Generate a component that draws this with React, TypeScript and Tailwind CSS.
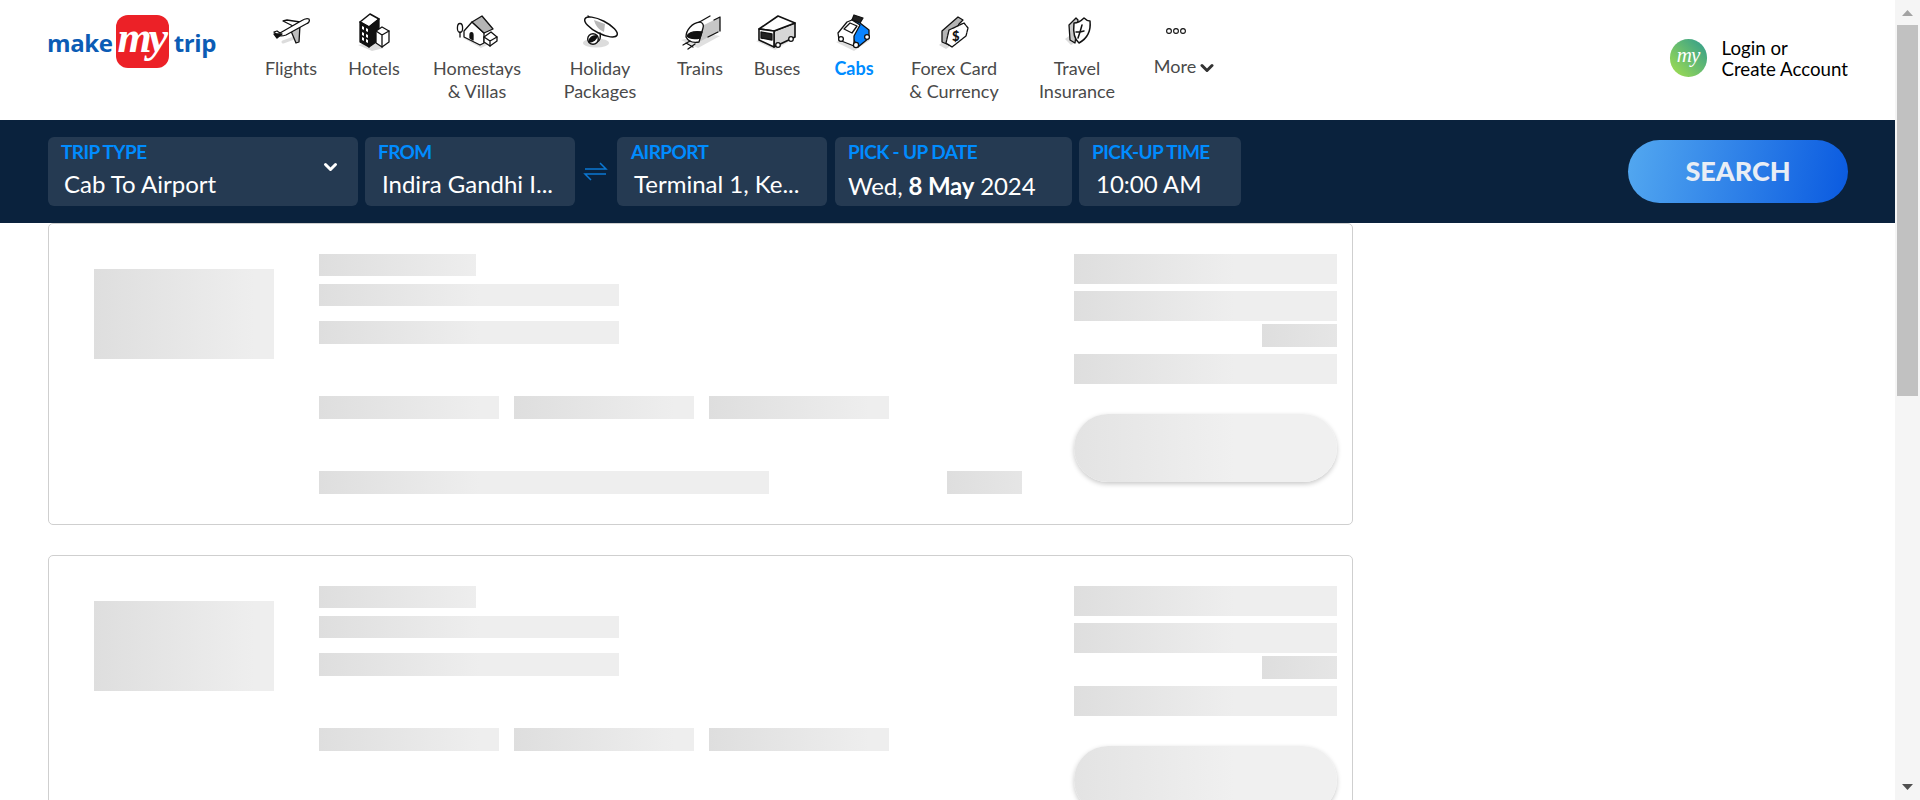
import React from "react";

const S = "#111";
const Svg = ({ children }: { children: React.ReactNode }) => (
  <svg width="44" height="40" viewBox="0 0 44 40" fill="none" stroke={S} strokeWidth="1.3" strokeLinejoin="round" strokeLinecap="round">
    {children}
  </svg>
);

const Plane = () => (
  <Svg>
    <path d="M14 30L25 26" stroke="#dcdcdc" strokeWidth="3" />
    <path d="M22 19L27 31L30 30L31 13Z" fill="#bdbdbd" />
    <path d="M24 14L14 9L18 8L31 10Z" fill="#fff" />
    <path d="M40 7C41 9 40 11 37 12L17 23C14 24 10 24 8 23L5 20L8 19L11 21L32 9C35 7 38 6 40 7Z" fill="#fff" />
    <path d="M5 22L13 22L8 26Z" fill="#111" />
  </Svg>
);
const Hotel = () => (
  <Svg>
    <path d="M6 33L20 39L32 36L20 30Z" fill="#dcdcdc" stroke="none" />
    <path d="M8 10L18 2L27 7L17 15Z" fill="#fff" strokeWidth="1.6" />
    <path d="M17 15L27 7L27 28L17 35Z" fill="#111" />
    <path d="M8 10L17 15L17 35L8 30Z" fill="#111" />
    <path d="M10 14L12 15V18L10 17ZM14 16L16 17V20L14 19ZM10 20L12 21V24L10 23ZM14 22L16 23V26L14 25ZM10 25L12 26V29L10 28ZM14 27L16 28V31L14 30Z" fill="#fff" stroke="none" />
    <path d="M24 19L30 15L37 19V30L30 35L24 31Z" fill="#fff" />
    <path d="M24 19L30 23L37 19M30 23V35" />
  </Svg>
);
const House = () => (
  <Svg>
    <path d="M8 26L26 36L38 30L20 20Z" fill="#e0e0e0" stroke="none" />
    <ellipse cx="5" cy="16" rx="2.6" ry="4.5" fill="#fff" />
    <path d="M5 20V25" />
    <path d="M9 19L17 10L29 21V31L25 33L9 25Z" fill="#fff" />
    <path d="M17 10L27 4L38 17L29 21Z" fill="#b5b5b5" />
    <path d="M15 23C15 20 18 20 18 23V28L15 26Z" fill="#111" />
    <path d="M29 25L36 20L42 25V29L35 34L29 30Z" fill="#fff" />
    <path d="M29 25L35 29L42 25M35 29V34" />
  </Svg>
);
const Holiday = () => (
  <Svg>
    <ellipse cx="18" cy="31" rx="13" ry="4.5" fill="#dcdcdc" stroke="none" />
    <path d="M10 4L13 7" strokeWidth="1.4" />
    <ellipse cx="23" cy="15" rx="18" ry="6.5" transform="rotate(27 23 15)" fill="#fff" strokeWidth="1.5" />
    <path d="M16 8L27 12L26 20C21 18 17 13 16 8Z" fill="#b8b8b8" stroke="none" />
    <path d="M22 21C23 26 22 29 19 30" strokeWidth="1.4" />
    <circle cx="15" cy="27" r="5.3" fill="#fff" strokeWidth="1.4" />
    <path d="M11 30C11 26 15 23 19 24C19 27 15 30 11 30Z" fill="#111" />
  </Svg>
);
const Train = () => (
  <Svg>
    <path d="M3 28L20 36L42 24L30 22Z" fill="#e0e0e0" stroke="none" />
    <path d="M24 14L42 5V19L21 30Z" fill="#c6c6c6" stroke="none" />
    <path d="M18 12L32 4M36 8L42 5V19M30 25L40 20" />
    <path d="M8 25C8 18 14 11 22 10C25 11 26 13 25 16L21 30C15 31 10 29 8 25Z" fill="#fff" />
    <path d="M9 24C11 20 16 19 24 20L22 26C17 27 12 27 9 24Z" fill="#111" />
    <path d="M5 33L12 29M10 37L17 32M8 31L15 35" />
  </Svg>
);
const Bus = () => (
  <Svg>
    <path d="M1 29L20 38L40 26L30 22Z" fill="#e2e2e2" stroke="none" />
    <path d="M19 19L40 11V25L19 35Z" fill="#d6d6d6" strokeWidth="1.6" />
    <path d="M4 17L23 4L40 11L19 19Z" fill="#fff" strokeWidth="1.6" />
    <path d="M4 17L19 19V35L4 28Z" fill="#fff" strokeWidth="1.6" />
    <path d="M6 20L17 22V28L6 26Z" fill="#222" />
    <circle cx="23" cy="33" r="2.3" fill="#fff" />
    <circle cx="36" cy="27" r="2.3" fill="#fff" />
  </Svg>
);
const Cab = () => (
  <Svg>
    <path d="M4 30L22 39L38 28L22 24Z" fill="#dfdfdf" stroke="none" />
    <path d="M22 3L31 6L28 11L20 8Z" fill="#222" />
    <path d="M20 8L28 11L37 18V26L26 35L19 23Z" fill="#0a84ff" />
    <path d="M6 21L15 10L20 8L28 13L22 24V34L7 28Z" fill="#fff" />
    <path d="M12 17L18 11L25 14L20 21Z" fill="#fff" />
    <circle cx="24" cy="33" r="2.6" fill="#fff" />
    <circle cx="35" cy="25" r="2.4" fill="#fff" />
    <circle cx="9" cy="27" r="2.4" fill="#fff" />
  </Svg>
);
const Forex = () => (
  <Svg>
    <path d="M7 33L14 37L20 33L12 29Z" fill="#dcdcdc" stroke="none" />
    <path d="M10 19L26 5L31 8L27 12L17 33L10 30Z" fill="#b5b5b5" />
    <path d="M17 18L32 11L36 16L34 24L20 35L14 31Z" fill="#fff" strokeDasharray="3 1" />
    <text x="20" y="29" fontSize="13" fontWeight="900" fill="#111" stroke="none" fontFamily="Lato, sans-serif">$</text>
  </Svg>
);
const Shield = () => (
  <Svg>
    <path d="M10 27L16 33L22 30L14 24Z" fill="#dcdcdc" stroke="none" />
    <path d="M14 13L21 6L23 8L20 31L15 28Z" fill="#c8c8c8" />
    <path d="M19 11C23 11 26 9 29 6C31 8 33 9 35 9C36 18 33 26 24 31C19 27 18 20 19 11Z" fill="#fff" strokeWidth="1.5" />
    <path d="M27 13L25 20L29 19M25 20L23 26M25 20L21 20" strokeWidth="1.5" />
  </Svg>
);

const Dots = () => (
  <svg width="44" height="40" viewBox="0 0 44 40" fill="none" stroke="#111" strokeWidth="1.1">
    <circle cx="15" cy="19" r="2.4" />
    <circle cx="22" cy="19" r="2.4" />
    <circle cx="29" cy="19" r="2.4" />
  </svg>
);

const Chevron = ({ className }: { className: string }) => (
  <svg className={className} viewBox="0 0 14 10" fill="none" stroke="currentColor" strokeWidth="3" strokeLinecap="round" strokeLinejoin="round">
    <path d="M2 2.5L7 7.5L12 2.5" />
  </svg>
);

const nav = [
  { l: ["Flights"], w: "w-[82px]", I: Plane },
  { l: ["Hotels"], w: "w-[84px]", I: Hotel },
  { l: ["Homestays", "& Villas"], w: "w-[122px]", I: House },
  { l: ["Holiday", "Packages"], w: "w-[124px]", I: Holiday },
  { l: ["Trains"], w: "w-[76px]", I: Train },
  { l: ["Buses"], w: "w-[78px]", I: Bus },
  { l: ["Cabs"], w: "w-[76px]", I: Cab, active: true },
  { l: ["Forex Card", "& Currency"], w: "w-[124px]", I: Forex },
  { l: ["Travel", "Insurance"], w: "w-[122px]", I: Shield },
];

const Logo = () => (
  <div className="flex items-center w-[169px] ml-[47px] mt-[15px] h-[53px] font-['Open_Sans',sans-serif] font-bold text-[24px] text-[#0b5cb5] tracking-[-0.4px]">
    <span className="w-[70px] mt-[3px] leading-none">make</span>
    <span className="w-[53px] h-[53px] shrink-0 rounded-[12px] bg-[#ec2127] flex items-center justify-center">
      <span className="font-['Liberation_Serif',serif] italic text-[44px] leading-none text-white tracking-[-3px] -mt-[8px] -ml-[2px]">my</span>
    </span>
    <span className="ml-[5px] mt-[3px] leading-none">trip</span>
  </div>
);

const Field = ({ w, label, children, lp = "pl-[13px]", pl = "pl-[17px]" }: { w: string; label: string; children: React.ReactNode; lp?: string; pl?: string }) => (
  <div className={`relative ${w} h-[69px] rounded-[6px] bg-[#253a52] shrink-0 pt-[4px]`}>
    <div className={`${lp} text-[#008cff] text-[19px] leading-[22px] font-bold tracking-[-0.6px]`}>{label}</div>
    <div className={`${pl} mt-[6px] text-white text-[24px] leading-[30px] whitespace-nowrap`}>{children}</div>
  </div>
);

const shim = "bg-[linear-gradient(to_right,#dedede_0,#eeeeee_160px)]";

const Bar = ({ c }: { c: string }) => <div className={`${shim} ${c}`} />;

const Card = () => (
  <div className="flex w-[1305px] h-[302px] ml-[48px] mb-[30px] border border-[#cfcfcf] rounded-[5px] shrink-0 box-border">
    <div className="ml-[45px] mt-[45px] mr-[45px] w-[180px] h-[90px] shrink-0">
      <Bar c="w-full h-full" />
    </div>
    <div className="w-[755px] pt-[30px] shrink-0 flex flex-col">
      <Bar c="w-[157px] h-[22px]" />
      <Bar c="w-[300px] h-[22px] mt-[8px]" />
      <Bar c="w-[300px] h-[23px] mt-[15px]" />
      <div className="flex gap-[15px] mt-[52px]">
        <Bar c="w-[180px] h-[23px]" />
        <Bar c="w-[180px] h-[23px]" />
        <Bar c="w-[180px] h-[23px]" />
      </div>
      <div className="flex mt-[52px]">
        <Bar c="w-[450px] h-[23px]" />
        <Bar c="w-[75px] h-[23px] ml-[178px]" />
      </div>
    </div>
    <div className="w-[264px] pt-[30px] shrink-0 flex flex-col items-end">
      <Bar c="w-[263px] h-[30px] mr-[1px]" />
      <Bar c="w-[263px] h-[30px] mr-[1px] mt-[7px]" />
      <Bar c="w-[75px] h-[23px] mr-[1px] mt-[3px]" />
      <Bar c="w-[263px] h-[30px] mr-[1px] mt-[7px]" />
      <div className="w-[263px] h-[68px] mr-[1px] mt-[30px] rounded-[34px] bg-[linear-gradient(to_right,#e3e3e3_0,#f0f0f0_160px)] shadow-[0_2px_5px_rgba(0,0,0,0.22)]" />
    </div>
  </div>
);

export default function App() {
  return (
    <div className="flex w-[1920px] h-[800px] overflow-hidden bg-white font-['Lato',sans-serif]">
      <div className="w-[1895px] shrink-0 flex flex-col">
        <header className="h-[120px] shrink-0 flex">
          <Logo />
          <nav className="flex ml-[34px]">
            {nav.map(({ l, w, I, active }) => (
              <div key={l[0]} className={`${w} flex flex-col items-center pt-[12px]`}>
                <I />
                <div className={`mt-[5px] text-center text-[18px] leading-[23px] whitespace-nowrap ${active ? "font-bold text-[#008cff]" : "text-[#4a4a4a]"}`}>
                  {l.map((t) => (
                    <div key={t}>{t}</div>
                  ))}
                </div>
              </div>
            ))}
            <div className="w-[92px] flex flex-col items-center pt-[12px]">
              <div className="-ml-[16px]"><Dots /></div>
              <div className="mt-[3px] flex items-center text-[18px] leading-[23px] text-[#4a4a4a]">
                More
                <Chevron className="w-[14px] h-[10px] ml-[4px] mt-[2px] text-[#333]" />
              </div>
            </div>
          </nav>
          <div className="ml-auto mr-[47px] flex items-start pt-[39px]">
            <div className="w-[37px] h-[38px] rounded-full bg-[linear-gradient(45deg,#a6e14d,#2d9a8f)] flex items-center justify-center">
              <span className="font-['Liberation_Serif',serif] italic text-[21px] leading-none text-white tracking-[-1px] -mt-[5px]">my</span>
            </div>
            <div className="ml-[15px] -mt-[1px] text-[18.7px] leading-[21px] text-black">
              <div>Login or</div>
              <div>Create Account</div>
            </div>
          </div>
        </header>

        <div className="h-[103px] shrink-0 bg-[#0a223d] flex items-start pl-[48px] pt-[17px]">
          <div className="relative w-[310px] h-[69px] rounded-[6px] bg-[#253a52] shrink-0 pt-[4px] pl-[13px]">
            <div className="text-[#008cff] text-[19px] leading-[22px] font-bold tracking-[-0.6px]">TRIP TYPE</div>
            <div className="pl-[3px] mt-[6px] text-white text-[24px] leading-[30px]">Cab To Airport</div>
            <Chevron className="absolute right-[20px] top-[25px] w-[15px] h-[10px] text-white" />
          </div>
          <div className="ml-[7px]">
            <Field w="w-[210px]" label="FROM">Indira Gandhi I...</Field>
          </div>
          <svg className="w-[42px] h-[69px] shrink-0" viewBox="0 0 42 69" fill="none" stroke="#0b78d4" strokeWidth="1.5">
            <path d="M10 32H31L25 26M31 37H10L16 43" />
          </svg>
          <Field w="w-[210px]" label="AIRPORT" lp="pl-[14px]">Terminal 1, Ke...</Field>
          <div className="ml-[8px]">
            <Field w="w-[237px]" label="PICK - UP DATE" pl="pl-[13px]">
              <span className="inline-block mt-[2px] tracking-[-0.15px]">Wed, <b>8 May</b> 2024</span>
            </Field>
          </div>
          <div className="ml-[7px]">
            <Field w="w-[162px]" label="PICK-UP TIME">10:00 AM</Field>
          </div>
          <div className="ml-[387px] mt-[3px] w-[220px] h-[63px] rounded-full bg-[linear-gradient(100deg,#53a8f0,#0a5ae0)] flex items-center justify-center text-[27px] font-black text-[#e8edf5]">
            SEARCH
          </div>
        </div>

        <div className="flex-1 flex flex-col overflow-hidden">
          <Card />
          <Card />
        </div>
      </div>

      <aside className="w-[25px] h-[800px] shrink-0 bg-[#f5f5f5] flex flex-col items-center">
        <svg className="w-[11px] h-[6px] mt-[10px]" viewBox="0 0 11 6" fill="#a3a3a3"><path d="M5.5 0L11 6H0Z" /></svg>
        <div className="w-[21px] h-[371px] mt-[9px] bg-[#c1c1c1]" />
        <svg className="w-[11px] h-[6px] mt-auto mb-[10px]" viewBox="0 0 11 6" fill="#505050"><path d="M0 0H11L5.5 6Z" /></svg>
      </aside>
    </div>
  );
}
